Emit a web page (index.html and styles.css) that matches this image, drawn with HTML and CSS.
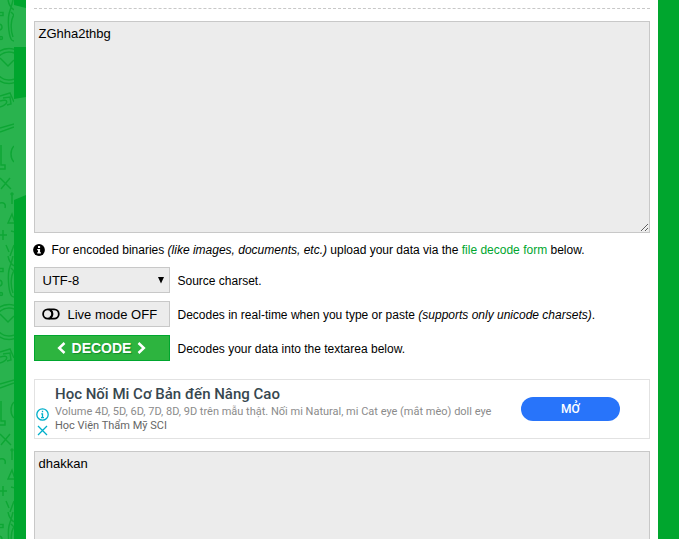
FILE: index.html
```html
<!DOCTYPE html>
<html lang="en">
<head>
<meta charset="utf-8">
<title>Base64 Decode</title>
<link rel="stylesheet" href="styles.css">
</head>
<body>
<svg class="backdrop" width="26" height="539" viewBox="0 0 26 539" aria-hidden="true">
  <defs>
    <pattern id="doodles" width="14" height="256" patternUnits="userSpaceOnUse">
      <g fill="none" stroke="#0da634" stroke-width="1.500">
        <path d="M8 0c1 5 3 8 6 10M13 0c-1 5-3 10-4 14s-1 19 2 25c1 2 2 2 3 2M14 15c-3 4-4 14-1 22M11 12l3 3"/>
        <rect x="-2" y="12.500" width="5" height="3"/>
        <circle cx="-1" cy="27" r="3"/>
        <circle cx="1" cy="38" r="1.500"/>
        <circle cx="9" cy="66" r="17.500"/>
        <circle cx="9" cy="66" r="14"/>
        <path d="M0 58l8 8 6-6M0 96l10-3 4 9M0 107c9-3 9-9 0-6M3 98l7-1 1 7-4 1M0 128l14-4M0 132l14-5M14 146c-4 4-4 12 0 16M1 145v20h4v4H-1"/>
        <path d="M0 178l11 11M10 178L1 189M0 203c4-1 6 1 5 5M8 223l4-9 3 9zM12 194v10M11 231l4 1M0 235h7M3 230v10M6 245l3 7M14 245l-4 11"/>
        <circle cx="12" cy="194" r="1"/>
      </g>
    </pattern>
  </defs>
  <rect width="26" height="539" fill="#00a62e"/>
  <path fill="#29b34e" d="M0 0h14v5l12 3v39H14v52l12-2v98l-12 5v339H0z"/>
  <rect width="14" height="539" fill="url(#doodles)"/>
</svg>
<main class="page">
  <hr class="divider">
  <textarea class="field source" spellcheck="false">ZGhha2thbg</textarea>
  <p class="note">
    <svg class="info" viewBox="0 0 12 12"><circle cx="6" cy="6" r="5.900"/><path fill="#fff" d="M5 1.900h2.100V4H5zM4.200 4.900h2.900v3.400h.8v1.300H4.200V8.300H5V6.200h-.8z"/></svg>
    <span>For encoded binaries <i>(like images, documents, etc.)</i> upload your data via the <a href="#">file decode form</a> below.</span>
  </p>
  <div class="row">
    <div class="control select"><span>UTF-8</span><svg width="6" height="7" viewBox="0 0 6 7"><path d="M0 0h6L3 6.500z"/></svg></div>
    <span>Source charset.</span>
  </div>
  <div class="row">
    <div class="control live"><svg width="18" height="12" viewBox="0 0 18 12" fill="none" stroke="#000" stroke-width="1.800"><circle cx="5.800" cy="6" r="4.700"/><path d="M6.500 1.300h5.600a4.700 4.700 0 0 1 0 9.400H6.500M8 2.300c3 2 3 5.400 0 7.400"/></svg><span>Live mode OFF</span></div>
    <span>Decodes in real-time when you type or paste <i>(supports only unicode charsets)</i>.</span>
  </div>
  <div class="row">
    <button class="control decode"><svg width="9" height="12" viewBox="0 0 9 12"><path d="M7.500 1L2.200 6l5.300 5"/></svg><span>DECODE</span><svg width="9" height="12" viewBox="0 0 9 12"><path d="M1.500 1l5.300 5-5.300 5"/></svg></button>
    <span>Decodes your data into the textarea below.</span>
  </div>
  <section class="ad">
    <div class="ad-icons">
      <svg width="13" height="13" viewBox="0 0 13 13"><circle cx="6.500" cy="6.500" r="5.700"/><path d="M6.500 2.700v1.500M5.200 5.800h1.300v4M5 9.700h3"/></svg>
      <svg width="11" height="11" viewBox="0 0 11 11"><path d="M1 1l9 9M10 1l-9 9"/></svg>
    </div>
    <div class="ad-copy">
      <div class="ad-title">Học Nối Mi Cơ Bản đến Nâng Cao</div>
      <div class="ad-text">Volume 4D, 5D, 6D, 7D, 8D, 9D trên mẫu thật. Nối mi Natural, mi Cat eye (mắt mèo) doll eye</div>
      <div class="ad-name">Học Viện Thẩm Mỹ SCI</div>
    </div>
    <a class="ad-open" href="#">MỞ</a>
  </section>
  <textarea class="field result" spellcheck="false">dhakkan</textarea>
</main>
</body>
</html>
```
FILE: styles.css
```css
* { box-sizing: border-box; }
body {
  margin: 0;
  height: 539px;
  overflow: hidden;
  display: flex;
  background: #00a62e;
  color: #000;
  font: 12px/16px "Liberation Sans", Arial, sans-serif;
}
svg { display: block; flex: none; }
.page { width: 632px; height: 539px; padding: 8px 8px 0 7.5px; background: #fff; overflow: hidden; }
.divider { width: 616px; height: 1px; margin: 0 0 12px; border: 0; border-top: 1px dashed #c8c8c8; }
.field {
  display: block;
  width: 616px;
  height: 212px;
  margin: 0;
  padding: 4px;
  border: 1px solid #c8c8c8;
  border-radius: 0;
  background: #ececec;
  color: #000;
  font: 13px/15px "Liberation Sans", Arial, sans-serif;
  outline: 0;
}
.note { display: flex; align-items: center; gap: 6px; height: 16px; margin: 9px 0; }
.info { width: 12px; height: 12px; margin: -1px 0.5px 0 -0.5px; }
.note a { color: #00a62e; text-decoration: none; }
.row { display: flex; align-items: center; gap: 8px; height: 26px; margin-bottom: 8px; }
.row > span { padding-top: 2px; }
.control {
  display: flex;
  align-items: center;
  width: 136px;
  height: 26px;
  padding: 0 8px;
  border: 1px solid #c8c8c8;
  background: #ececec;
  font: 13px/16px "Liberation Sans", Arial, sans-serif;
}
.select { justify-content: space-between; padding-right: 5px; }
.select span, .live span { padding-top: 1px; }
.live { gap: 7px; }
.live svg { margin: -1px 0.5px 0 -0.5px; }
.decode {
  justify-content: center;
  gap: 6px;
  border-color: #00a62e;
  background: #2db43f;
  color: #fff;
  font-weight: bold;
  font-size: 14px;
  text-shadow: 1px 1px 1px #168b2b;
}
.decode path { fill: none; stroke: #fff; stroke-width: 2.5; }
.ad { display: flex; width: 616px; height: 60px; margin: 18px 0 12px; border: 1px solid #e2e2e2; font-family: Roboto, sans-serif; }
.ad-icons { width: 20.5px; padding: 28px 0 0 1.5px; }
.ad-icons svg { fill: none; stroke: #00afca; stroke-width: 1.3; }
.ad-icons svg + svg { margin: 4px 0 0 1px; }
.ad-copy { width: 466px; padding-top: 5px; white-space: nowrap; }
.ad-title { color: #37474f; font-size: 15px; line-height: 18px; font-weight: 500; }
.ad-text { padding-top: 1px; color: #8b8b8b; font-size: 11px; line-height: 15px; }
.ad-name { color: #666; font-size: 11px; line-height: 13px; }
.ad-open {
  width: 99px;
  height: 24px;
  margin-top: 17px;
  border-radius: 12px;
  background: #2874fa;
  color: #fff;
  font-size: 12px;
  line-height: 24px;
  font-weight: 500;
  text-align: center;
  text-decoration: none;
}
```
